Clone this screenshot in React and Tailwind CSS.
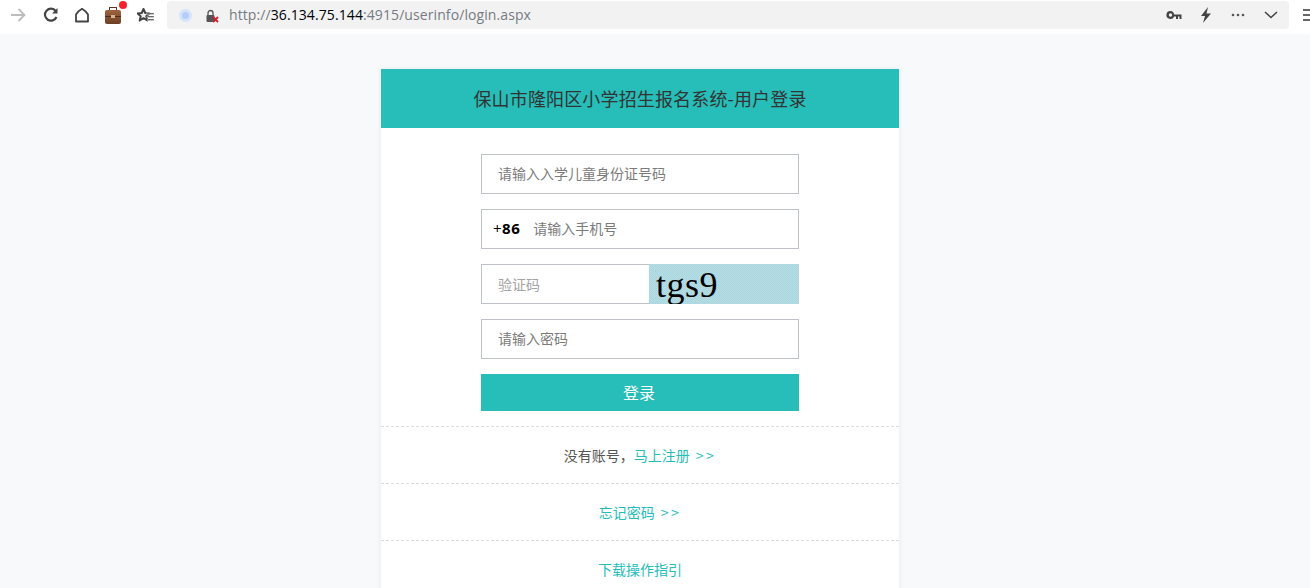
import React from "react";

const cjk = "font-['Noto_Sans_CJK_SC','Noto_Sans',sans-serif]";

const Toolbar = () => (
  <div className="flex h-[34px] items-start overflow-hidden bg-white pt-px">
    <div className="flex h-[28px] w-[167px] shrink-0 items-center">
      <svg className="ml-[9px]" width="18" height="18" viewBox="0 0 18 18" fill="none" stroke="#bdbdbd" strokeWidth="1.800">
        <path d="M2 9h13.500M9.500 3l6 6-6 6" />
      </svg>
      <svg className="ml-[15px]" width="18" height="18" viewBox="0 0 18 18" fill="none" stroke="#444" strokeWidth="2.200">
        <path d="M14.500 11a6 6 0 1 1-.8-6" />
        <path d="M15.500 2v5.500H10z" fill="#444" stroke="none" />
      </svg>
      <svg className="ml-[14px]" width="16" height="16" viewBox="0 0 16 16" fill="none" stroke="#444" strokeWidth="1.800">
        <path d="M2 7.500C3.500 5 6 3 8 1.800 10 3 12.500 5 14 7.500v7H2z" strokeLinejoin="round" />
      </svg>
      <div className="relative ml-[15px] mt-[3px] h-[14px] w-[16px] rounded-[2px] bg-gradient-to-b from-[#a0653f] to-[#6e3f25]">
        <div className="absolute -top-[3px] left-[4px] h-[3px] w-[8px] rounded-t-[1px] border border-b-0 border-[#5a3520]" />
        <div className="absolute left-0 top-[6px] h-[1px] w-full bg-[#4f2d18]" />
        <div className="absolute left-[6px] top-[5px] h-[3px] w-[4px] bg-[#d9b48a]" />
        <div className="absolute -right-[6px] -top-[9px] h-[8px] w-[8px] rounded-full bg-[#f5222d]" />
      </div>
      <svg className="ml-[16px] mt-[1px]" width="17" height="15" viewBox="0 0 17 15">
        <path d="M6.500 1l1.800 4 4.200.4-3.200 2.800 1 4.300-3.800-2.300-3.800 2.300 1-4.300L.5 5.400l4.200-.4z" fill="#f2f2f2" stroke="#444" strokeWidth="2" strokeLinejoin="round" />
        <path d="M9.500 5h7.500v1.500H9.500zM10 8h7v1.500h-7zM10.500 11h6.500v1.500h-6.500z" fill="#444" stroke="#fff" strokeWidth="0.4" />
      </svg>
    </div>
    <div className="flex h-[28px] w-[1122px] shrink-0 items-center rounded-[4px] bg-[#f2f2f2]">
      <div className="ml-[12px] flex h-[13px] w-[13px] items-center justify-center rounded-full bg-[#d5e3fb]">
        <div className="h-[7px] w-[7px] rounded-full bg-[#b5cdf8]" />
      </div>
      <svg className="ml-[13px] mt-[2px]" width="14" height="14" viewBox="0 0 14 14">
        <path d="M3 6V4a2.500 2.500 0 0 1 5 0v2" fill="none" stroke="#555" strokeWidth="1.300" />
        <rect x="1.500" y="6" width="8" height="7" rx="1" fill="#555" />
        <path d="M8 8l5 5M13 8l-5 5" stroke="#d0202a" strokeWidth="1.800" />
      </svg>
      <div className="ml-[10px] -translate-y-px font-['Open_Sans',sans-serif] text-[14px] tracking-[0.09px] text-[#757b85]">
        http://<span className="text-black">36.134.75.144</span>:4915/userinfo/login.aspx
      </div>
      <svg className="ml-auto" width="18" height="12" viewBox="0 0 18 12" fill="#444">
        <path d="M4.500 2a4 4 0 1 0 3.600 5.500H10V10h2V7.500h1.500V10h2V5.500H8.100A4 4 0 0 0 4.500 2zm0 2.300a1.700 1.700 0 1 1 0 3.400 1.700 1.700 0 0 1 0-3.400z" />
      </svg>
      <svg className="ml-[16px]" width="12" height="16" viewBox="0 0 12 16" fill="#444">
        <path d="M8 0L1 9h4l-2 7 8-9.500H6.500z" />
      </svg>
      <svg className="ml-[19px]" width="14" height="4" viewBox="0 0 14 4" fill="#555">
        <circle cx="2" cy="2" r="1.300" />
        <circle cx="7" cy="2" r="1.300" />
        <circle cx="12" cy="2" r="1.300" />
      </svg>
      <svg className="ml-[19px] mr-[11px]" width="14" height="8" viewBox="0 0 14 8" fill="none" stroke="#444" strokeWidth="1.600">
        <path d="M1 1l6 5.500L13 1" />
      </svg>
    </div>
    <div className="ml-[14px] mt-[8px] flex w-[13px] shrink-0 flex-col gap-[3px]">
      <div className="h-[2px] w-[13px] bg-[#666]" />
      <div className="h-[2px] w-[13px] bg-[#666]" />
      <div className="h-[2px] w-[13px] bg-[#666]" />
    </div>
  </div>
);

const Field = ({ placeholder }) => (
  <div className="flex h-[40px] w-[318px] items-center border border-[#bfc3c9] bg-white pb-[2px] pl-[16px] text-[14px] text-[#7b7b7b]">
    {placeholder}
  </div>
);

const Arrows = () => <span className="ml-[6px] tracking-[2.500px]">&gt;&gt;</span>;

const LinkRow = ({ children }) => (
  <div className="flex h-[57px] items-center justify-center border-t border-dashed border-[#dcdcdc] pt-px text-[14px] text-[#26bdb8]">
    {children}
  </div>
);

export default function App() {
  return (
    <div className={`h-[588px] overflow-hidden bg-[#f8f9fb] ${cjk}`}>
      <Toolbar />
      <div className="w-[1280px] pt-[34px]">
        <div className="mx-auto w-[520px] border-x border-t border-[#f2f3f5] bg-white shadow-[0_0_4px_rgba(0,0,0,0.06)]">
          <div className="flex h-[59px] items-center justify-center bg-[#27bdb8] pb-px text-[18px] tracking-[0.15px] text-[#333]">
            保山市隆阳区小学招生报名系统-用户登录
          </div>
          <div className="flex flex-col items-center gap-[15px] pb-[15px] pt-[26px]">
            <Field placeholder="请输入入学儿童身份证号码" />
            <div className="flex h-[40px] w-[318px] items-center border border-[#bfc3c9] bg-white pb-[2px] pl-[11px] text-[14px] text-[#7b7b7b]">
              <span className="mr-[13px] font-['Open_Sans',sans-serif] text-[15px] font-bold tracking-[0.5px] text-black">
                <span className="font-normal">+</span>86
              </span>
              请输入手机号
            </div>
            <div className="flex h-[40px] w-[318px]">
              <div className="flex h-full w-[168px] items-center border-y border-l border-[#bfc3c9] pl-[16px] text-[14px] text-[#a3a3a3]">
                验证码
              </div>
              <div className="flex h-full w-[150px] items-start overflow-hidden bg-[repeating-conic-gradient(#a2d6ea_0_25%,#bedcd8_0_50%)] bg-[length:2px_2px] pl-[7px] font-['Liberation_Serif',serif] text-[36px] leading-[42px] tracking-[0.5px] text-black">
                tgs9
              </div>
            </div>
            <Field placeholder="请输入密码" />
            <div className="flex h-[37px] w-[318px] items-center justify-center bg-[#27bdb8] pb-px pr-[2px] text-[16px] text-white">
              登录
            </div>
          </div>
          <LinkRow>
            <span className="text-[#555]">没有账号，</span>
            <span>马上注册</span>
            <Arrows />
          </LinkRow>
          <LinkRow>
            忘记密码
            <Arrows />
          </LinkRow>
          <LinkRow>下载操作指引</LinkRow>
        </div>
      </div>
    </div>
  );
}
